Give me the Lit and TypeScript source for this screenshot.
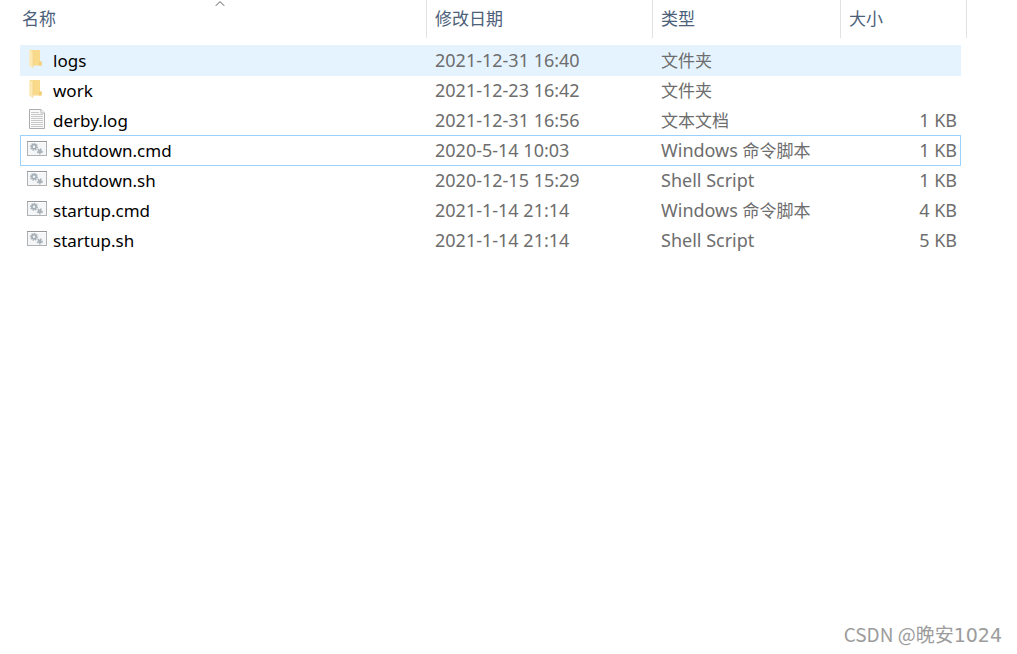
import { LitElement, html, svg, css } from "lit";
import { customElement, property, state } from "lit/decorators.js";

type Kind = "folder" | "text" | "script";

interface FileEntry {
  name: string;
  date: string;
  latinType?: string;
  hanType?: string;
  size?: string;
  kind: Kind;
}

const FILES: FileEntry[] = [
  { name: "logs", date: "2021-12-31 16:40", hanType: "文件夹", kind: "folder" },
  { name: "work", date: "2021-12-23 16:42", hanType: "文件夹", kind: "folder" },
  { name: "derby.log", date: "2021-12-31 16:56", hanType: "文本文档", size: "1 KB", kind: "text" },
  { name: "shutdown.cmd", date: "2020-5-14 10:03", latinType: "Windows ", hanType: "命令脚本", size: "1 KB", kind: "script" },
  { name: "shutdown.sh", date: "2020-12-15 15:29", latinType: "Shell Script", size: "1 KB", kind: "script" },
  { name: "startup.cmd", date: "2021-1-14 21:14", latinType: "Windows ", hanType: "命令脚本", size: "4 KB", kind: "script" },
  { name: "startup.sh", date: "2021-1-14 21:14", latinType: "Shell Script", size: "5 KB", kind: "script" },
];

@customElement("file-icon")
export class FileIcon extends LitElement {
  @property() kind: Kind = "text";

  static styles = css`
    :host { display: block; width: 20px; height: 20px; }
    svg { display: block; }
  `;

  private gear(cx: number, cy: number, r: number) {
    return svg`
      <circle cx=${cx} cy=${cy} r=${r} fill="none" stroke="#b3bbc1" stroke-width="1.6" stroke-dasharray="1.5 1"></circle>
      <circle cx=${cx} cy=${cy} r=${r - 1.2} fill="none" stroke="#a5afb6" stroke-width="1.7"></circle>`;
  }

  private drawing() {
    if (this.kind === "folder") {
      return svg`
        <path d="M3 1H13V12.6H14.6V16.5H3Z" fill="#f9d98a"></path>
        <path d="M12.4 12.6H14.6V16.5H11.6Z" fill="#f3cd78"></path>
        <path d="M2.2 1.2L6 2.8V19L2.2 16.8Z" fill="#fde9b4"></path>
        <path d="M6 2.8V18.6" stroke="#f0d085" stroke-width=".6"></path>`;
    }
    if (this.kind === "text") {
      return svg`
        <path d="M2.5.5H14L17.5 4V19.5H2.5Z" fill="#fafafa" stroke="#acacac"></path>
        <path d="M14 .5V4H17.5" fill="#fff" stroke="#b4b4b4"></path>
        <path d="M4 3.5H12M4 5.5H16M4 7.5H16M4 9.5H16M4 11.5H16M4 13.5H16M4 15.5H16M4 17.5H16" stroke="#c8c8c8"></path>`;
    }
    return svg`
      <rect x=".5" y="2.5" width="19" height="14" fill="#f5f6f7" stroke="#b0b2b4"></rect>
      <path d="M0 2.5H20" stroke="#969899"></path>
      <path d="M1 3.5H19" stroke="#fff"></path>
      ${this.gear(7, 7.8, 3.3)}
      ${this.gear(12.8, 12.4, 2.3)}`;
  }

  render() {
    return html`<svg width="20" height="20" viewBox="0 0 20 20" aria-hidden="true">${this.drawing()}</svg>`;
  }
}

@customElement("app-root")
export class AppRoot extends LitElement {
  @state() private hovered = "logs";
  @state() private focused = "shutdown.cmd";

  static styles = css`
    :host {
      display: flex;
      flex-direction: column;
      min-height: 100vh;
      background: #fff;
      color: #6d6d6d;
      font-family: "Noto Sans", "Noto Sans CJK SC", sans-serif;
      font-size: 18px;
      line-height: 28px;
    }
    .files { display: block; margin: 0 50px 0 14px; }
    .head, .body { display: block; }
    .row {
      display: grid;
      grid-template-columns: minmax(0, 1fr) 226px 188px 126px;
    }
    .col {
      position: relative;
      height: 38px;
      padding: 0;
      border-right: 1px solid #e2e2e2;
      font-weight: 400;
    }
    .sort {
      display: block;
      width: 100%;
      height: 36px;
      padding: 0 8px;
      border: 0;
      background: none;
      color: #4c607a;
      font-family: "Noto Sans CJK SC", sans-serif;
      font-size: 17px;
      line-height: 36px;
      text-align: left;
    }
    .arrow { position: absolute; top: 0; left: 50%; margin-left: -5px; }
    .body { padding: 7px 6px 0; }
    .item {
      grid-template-columns: minmax(0, 1fr) 226px 188px 119px;
      height: 29px;
      margin-bottom: -1px;
      border: 1px solid transparent;
    }
    .item.hover { background: #e5f3ff; border-color: #e5f3ff; }
    .item.focus { border-color: #99d1ff; }
    .cell { padding: 0 0 0 8px; white-space: pre; }
    .name {
      display: flex;
      gap: 6px;
      padding-left: 6px;
      color: #000;
      font-size: 17px;
      line-height: 30px;
    }
    .icon { margin-top: 3px; }
    .han { font-family: "Noto Sans CJK SC", sans-serif; font-size: 17px; line-height: 1; }
    .size { padding-right: 3px; text-align: right; }
    .mark {
      margin: auto 15px 5px auto;
      color: #9c9c9c;
      font-family: "Noto Sans CJK SC", sans-serif;
      font-size: 19px;
    }
    .digits { font-family: "DejaVu Sans", sans-serif; font-size: 19px; }
  `;

  private header(label: string, sorted = false) {
    return html`<th class="col" scope="col">
      <button class="sort" type="button">${label}</button>
      ${sorted
        ? html`<svg class="arrow" width="10" height="8" viewBox="0 0 10 8" aria-hidden="true">
            <path d="M.8 5.8L5 1.6L9.2 5.8" fill="none" stroke="#5a5a5a"></path>
          </svg>`
        : ""}
    </th>`;
  }

  private item(f: FileEntry) {
    const mode = f.name === this.focused ? "focus" : f.name === this.hovered ? "hover" : "";
    return html`<tr class="row item ${mode}"
      @mouseenter=${() => (this.hovered = f.name)}
      @click=${() => (this.focused = f.name)}>
      <td class="cell name"><file-icon class="icon" .kind=${f.kind}></file-icon><span>${f.name}</span></td>
      <td class="cell">${f.date}</td>
      <td class="cell">${f.latinType ?? ""}${f.hanType ? html`<span class="han">${f.hanType}</span>` : ""}</td>
      <td class="cell size">${f.size ?? ""}</td>
    </tr>`;
  }

  render() {
    return html`
      <table class="files">
        <thead class="head">
          <tr class="row">
            ${this.header("名称", true)}${this.header("修改日期")}${this.header("类型")}${this.header("大小")}
          </tr>
        </thead>
        <tbody class="body">${FILES.map((f) => this.item(f))}</tbody>
      </table>
      <div class="mark">CSDN @晚安<span class="digits">1024</span></div>
    `;
  }
}
